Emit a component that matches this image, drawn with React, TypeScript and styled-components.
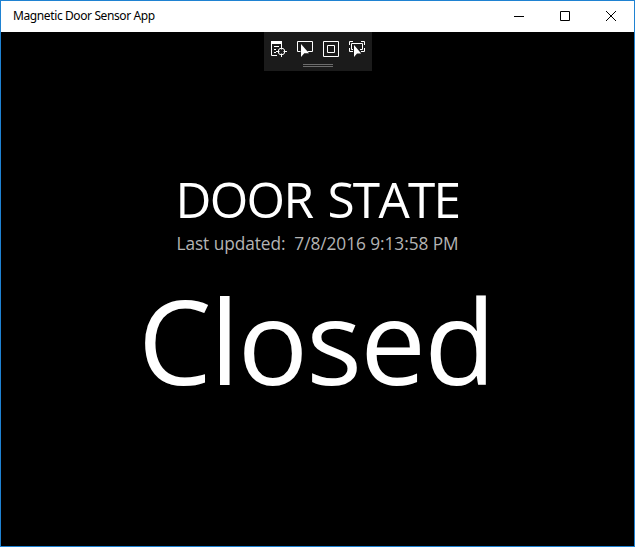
import React from "react";
import styled, { createGlobalStyle } from "styled-components";

const GlobalStyle = createGlobalStyle`
  html, body { margin: 0; background: #000; overflow: hidden; }
  * { box-sizing: border-box; }
`;

const AppWindow = styled.div`
  display: flex;
  flex-direction: column;
  width: 100vw;
  height: 100vh;
  border: 1px solid #1f82d2;
  background: #000;
  font-family: "Open Sans", "Noto Sans", sans-serif;
`;

const TitleBar = styled.header`
  display: flex;
  flex: none;
  height: 31px;
  background: #fff;
  color: #000;
`;

const WindowTitle = styled.h1`
  flex: 1;
  margin: 0;
  padding-left: 12px;
  font-family: "Noto Sans", sans-serif;
  font-size: 12px;
  font-weight: 400;
  line-height: 30px;
  letter-spacing: -0.39px;
  white-space: nowrap;
`;

const CaptionButton = styled.button`
  display: flex;
  align-items: center;
  justify-content: center;
  width: 46px;
  height: 30px;
  padding: 0;
  border: 0;
  background: transparent;
  color: #000;
`;

const Content = styled.main`
  display: flex;
  flex: 1;
  flex-direction: column;
  align-items: center;
  color: #fff;
`;

const DebugToolbar = styled.div`
  display: flex;
  flex-direction: column;
  align-items: center;
  width: 108px;
  height: 39px;
  padding-top: 9px;
  background: #1b1b1b;
`;

const ToolRow = styled.div`
  display: flex;
  gap: 10px;
`;

const Icon = styled.svg`
  display: block;
  fill: none;
  stroke: currentColor;
`;

const Grip = styled.div`
  width: 30px;
  height: 3px;
  margin-top: 7px;
  border: solid #6c6c6c;
  border-width: 1px 0;
`;

const TextLine = styled.div<{ $size: number; $height: number; $top: number; $spacing: number; $wordSpacing?: number; $color?: string }>`
  height: ${(p) => p.$height}px;
  margin-top: ${(p) => p.$top}px;
  font-size: ${(p) => p.$size}px;
  line-height: ${(p) => p.$height}px;
  letter-spacing: ${(p) => p.$spacing}px;
  word-spacing: ${(p) => p.$wordSpacing ?? 0}px;
  color: ${(p) => p.$color ?? "#fff"};
  white-space: pre;
`;

const StateLine = styled(TextLine)`
  padding-right: 3px;
`;

export default function App() {
  return (
    <AppWindow>
      <GlobalStyle />
      <TitleBar>
        <WindowTitle>Magnetic Door Sensor App</WindowTitle>
        <CaptionButton aria-label="Minimize">
          <Icon width="10" height="10"><path d="M0 5.5h10" /></Icon>
        </CaptionButton>
        <CaptionButton aria-label="Maximize">
          <Icon width="10" height="10"><path d="M.5.5h9v9h-9z" /></Icon>
        </CaptionButton>
        <CaptionButton aria-label="Close">
          <Icon width="10" height="10"><path d="M0 0l10 10M10 0L0 10" /></Icon>
        </CaptionButton>
      </TitleBar>
      <Content>
        <DebugToolbar>
          <ToolRow>
            <Icon width="16" height="16">
              <path d="M.5 3v11.5H6M10.5 3V5M3 5.5h5M3 8.5h2M3 11.5h2" />
              <path d="M0 0h11v3H0z" fill="currentColor" stroke="none" />
              <circle cx="10.5" cy="10.5" r="3.3" />
              <path d="M10.5 5v3.5M10.5 12.5V16M5 10.5h3.5M12.5 10.5H16" />
            </Icon>
            <Icon width="16" height="16">
              <path d="M3.5 10.5H.5v-10h15v10h-5" />
              <path d="M4 3v13l3.3-3.8H12z" fill="currentColor" stroke="none" />
            </Icon>
            <Icon width="16" height="16">
              <path d="M.5.5h15v15H.5zM4.5 4.5h7v7h-7z" />
            </Icon>
            <Icon width="16" height="16">
              <path d="M.5 4V.5H4M12 .5h3.5V4M.5 7v3.5H4M15.5 7v3.5H12M4 8.5H2.5v-6h11v6H11" />
              <path d="M5 4v12l3-3.5h4.2z" fill="currentColor" stroke="none" />
            </Icon>
          </ToolRow>
          <Grip />
        </DebugToolbar>
        <TextLine $size={49.5} $height={66} $top={95} $spacing={-1.7} $wordSpacing={4}>DOOR STATE</TextLine>
        <TextLine $size={17.3} $height={24} $top={0} $spacing={-0.06} $color="#b4b4b4">{"Last updated:  7/8/2016 9:13:58 PM"}</TextLine>
        <StateLine $size={117} $height={160} $top={4} $spacing={-1.8}>Closed</StateLine>
      </Content>
    </AppWindow>
  );
}
